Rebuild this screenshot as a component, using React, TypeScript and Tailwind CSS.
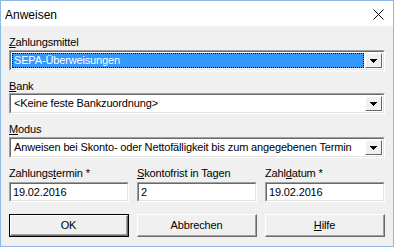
import React from "react";

const font = { fontFamily: '"Liberation Sans", Arial, sans-serif' };

function Arrow() {
  return (
    <svg width="7" height="4" viewBox="0 0 7 4" className="block">
      <path d="M0 0h7v1H0zM1 1h5v1H1zM2 2h3v1H2zM3 3h1v1H3z" fill="#000" />
    </svg>
  );
}

function Combo({ text, selected }: { text: string; selected?: boolean }) {
  return (
    <div className="flex h-[21px] border-t border-l border-b border-r border-t-[#a0a0a0] border-l-[#a0a0a0] border-b-white border-r-white">
      <div className="flex flex-1 border-t border-l border-t-[#696969] border-l-[#696969] border-b border-r border-b-[#e3e3e3] border-r-[#e3e3e3] bg-white p-[1px]">
        <div
          className={
            selected
              ? "flex flex-1 items-center border border-dotted border-black bg-[#3399ff] pl-[1px] text-white"
              : "flex flex-1 items-center pl-[2px] text-black"
          }
        >
          <span className="whitespace-nowrap leading-[13px]">{text}</span>
        </div>
        <div className="ml-[1px] flex w-[17px] items-center justify-center border-t border-l border-t-white border-l-white border-b border-r border-b-[#696969] border-r-[#696969] bg-[#f0f0f0]">
          <Arrow />
        </div>
      </div>
    </div>
  );
}

function Input({ value }: { value: string }) {
  return (
    <div className="flex h-[20px] border-t border-l border-b border-r border-t-[#a0a0a0] border-l-[#a0a0a0] border-b-white border-r-white">
      <div className="flex flex-1 items-center border-t border-l border-t-[#696969] border-l-[#696969] border-b border-r border-b-[#e3e3e3] border-r-[#e3e3e3] bg-white pl-[2px]">
        <span className="leading-[13px]">{value}</span>
      </div>
    </div>
  );
}

function Btn({ children, isDefault }: { children: React.ReactNode; isDefault?: boolean }) {
  return (
    <div className={isDefault ? "flex h-[23px] w-[120px] border border-black" : "flex h-[23px] w-[120px]"}>
      <div className="flex flex-1 border-t border-l border-t-white border-l-white border-b border-r border-b-[#696969] border-r-[#696969]">
        <div className="flex flex-1 items-center justify-center border-b border-r border-b-[#a0a0a0] border-r-[#a0a0a0] bg-[#f0f0f0]">
          {children}
        </div>
      </div>
    </div>
  );
}

export default function App() {
  return (
    <div
      className="flex h-[247px] w-[394px] flex-col border border-[#8fb8e3] bg-[#f0f0f0] text-[11px] tracking-[-0.15px] text-black"
      style={font}
    >
      <div className="flex h-[25px] items-start justify-between bg-white pl-[4px] pr-[9px] pt-[7px]">
        <span className="text-[12px] leading-[15px] tracking-normal">Anweisen</span>
        <svg width="11" height="11" viewBox="0 0 11 11" className="mt-[1px]">
          <path d="M0.5 0.5L10.5 10.5M10.5 0.5L0.5 10.5" stroke="#000" strokeWidth="1" />
        </svg>
      </div>

      <div className="flex flex-1 flex-col px-2 pt-[10px]">
        <label className="h-[13px] leading-[13px]">
          <u>Z</u>ahlungsmittel
        </label>
        <div className="mt-[1px]">
          <Combo text="SEPA-Überweisungen" selected />
        </div>

        <label className="mt-[9px] h-[13px] leading-[13px]">
          <u>B</u>ank
        </label>
        <Combo text="<Keine feste Bankzuordnung>" />

        <label className="mt-[9px] h-[13px] leading-[13px]">
          <u>M</u>odus
        </label>
        <div className="mt-[1px]">
          <Combo text="Anweisen bei Skonto- oder Nettofälligkeit bis zum angegebenen Termin" />
        </div>

        <div className="mt-[9px] grid grid-cols-3 gap-x-2">
          <div className="flex flex-col gap-[2px]">
            <label className="h-[13px] leading-[13px]">
              Zahlungs<u>t</u>ermin *
            </label>
            <Input value="19.02.2016" />
          </div>
          <div className="flex flex-col gap-[2px]">
            <label className="h-[13px] leading-[13px]">
              <u>S</u>kontofrist in Tagen
            </label>
            <Input value="2" />
          </div>
          <div className="flex flex-col gap-[2px]">
            <label className="h-[13px] leading-[13px]">
              Zahl<u>d</u>atum *
            </label>
            <Input value="19.02.2016" />
          </div>
        </div>

        <div className="mt-[12px] flex gap-2">
          <Btn isDefault>OK</Btn>
          <Btn>Abbrechen</Btn>
          <Btn>
            <span>
              <u>H</u>ilfe
            </span>
          </Btn>
        </div>
      </div>
    </div>
  );
}
